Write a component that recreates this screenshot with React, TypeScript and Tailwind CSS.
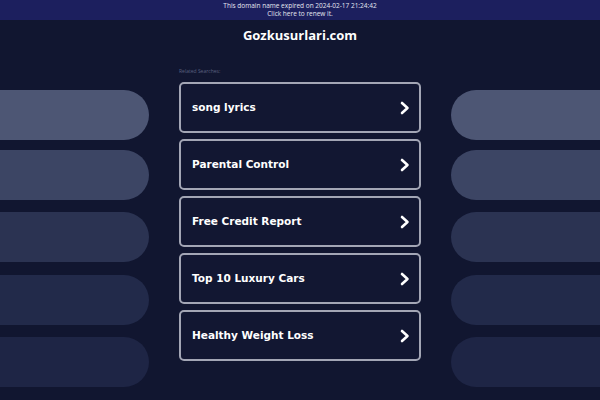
const searches = ["song lyrics", "Parental Control", "Free Credit Report", "Top 10 Luxury Cars", "Healthy Weight Loss"]

const pills = [
  { color: "bg-[#4d5674]", mt: "mt-[90px]" },
  { color: "bg-[#3c4564]", mt: "mt-[10px]" },
  { color: "bg-[#2b3352]", mt: "mt-[12px]" },
  { color: "bg-[#222a4a]", mt: "mt-[13px]" },
  { color: "bg-[#1e2545]", mt: "mt-[12px]" },
]

function Chevron() {
  return (
    <svg width="10" height="14" viewBox="0 0 10 14" fill="none">
      <polyline points="2,2 7.5,7 2,12" stroke="white" strokeWidth="2.6" strokeLinecap="round" strokeLinejoin="round" />
    </svg>
  )
}

export default function App() {
  return (
    <div className="w-[600px] h-[400px] overflow-hidden bg-[#111630] relative font-['Open_Sans',sans-serif]">
      <div className="absolute left-0 top-0 flex flex-col">
        {pills.map((p, i) => (
          <div key={i} className={`w-[149px] h-[50px] rounded-r-[25px] ${p.color} ${p.mt}`} />
        ))}
      </div>
      <div className="absolute right-0 top-0 flex flex-col">
        {pills.map((p, i) => (
          <div key={i} className={`w-[149px] h-[50px] rounded-l-[25px] ${p.color} ${p.mt}`} />
        ))}
      </div>

      <div className="relative h-[20px] bg-[#1c1f5e] flex flex-col items-center justify-center text-[6.5px] leading-[8px] text-[#e5e7f0]">
        <div>This domain name expired on 2024-02-17 21:24:42</div>
        <div>Click here to renew it.</div>
      </div>

      <div className="relative text-center text-white font-bold text-[13px] mt-[5px] leading-[20px]">Gozkusurlari.com</div>

      <div className="relative w-[242px] mx-auto mt-[23px]">
        <div className="text-[5px] leading-[6px] text-[#5b6180]">Related Searches:</div>
        <div className="flex flex-col gap-[6px] mt-[8px]">
          {searches.map((s) => (
            <div
              key={s}
              className="h-[51px] border-2 border-[#a3a6b5] rounded-[5px] bg-[#121732] flex items-center justify-between pl-[11px] pr-[9px] font-['DejaVu_Sans',sans-serif] font-bold text-[10.5px] text-white"
            >
              <span>{s}</span>
              <Chevron />
            </div>
          ))}
        </div>
      </div>
    </div>
  )
}
